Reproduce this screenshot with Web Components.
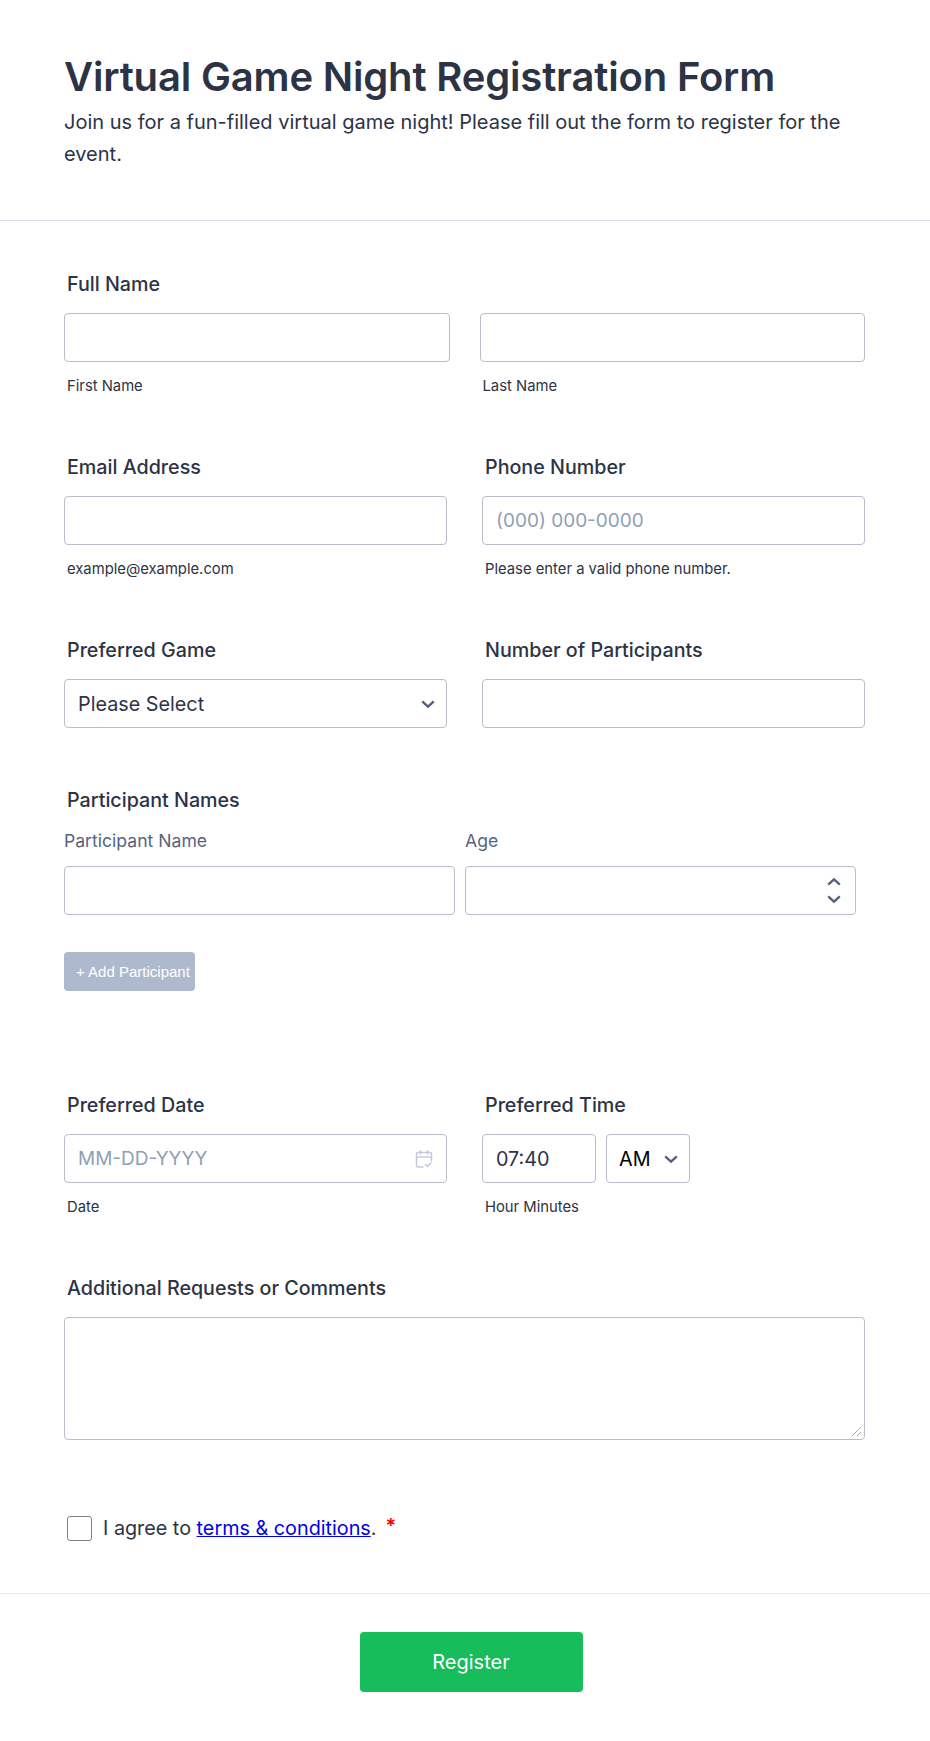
<!DOCTYPE html>
<html lang="en">
<head>
<meta charset="utf-8">
<title>Virtual Game Night Registration Form</title>
<style>
  html, body { margin: 0; background: #fff; }
  body { font-family: Inter, "Liberation Sans", sans-serif; color: #2c3345; }
</style>
</head>
<body>
<form-header title-text="Virtual Game Night Registration Form">Join us for a fun-filled virtual game night! Please fill out the form to register for the event.</form-header>

<form-body>
  <form-line label="Full Name" gap="30" style="margin-bottom:59px">
    <form-field sub="First Name"><text-box></text-box></form-field>
    <form-field sub="Last Name"><text-box></text-box></form-field>
  </form-line>

  <form-row style="margin-bottom:59px">
    <form-line label="Email Address">
      <form-field sub="example@example.com"><text-box></text-box></form-field>
    </form-line>
    <form-line label="Phone Number">
      <form-field sub="Please enter a valid phone number."><text-box muted>(000) 000-0000</text-box></form-field>
    </form-line>
  </form-row>

  <form-row style="margin-bottom:60px">
    <form-line label="Preferred Game">
      <form-field><text-box icon="chevron">Please Select</text-box></form-field>
    </form-line>
    <form-line label="Number of Participants">
      <form-field><text-box></text-box></form-field>
    </form-line>
  </form-row>

  <participant-table></participant-table>

  <form-row style="margin-bottom:59px">
    <form-line label="Preferred Date">
      <form-field sub="Date"><text-box icon="calendar" muted>MM-DD-YYYY</text-box></form-field>
    </form-line>
    <form-line label="Preferred Time">
      <form-field sub="Hour Minutes"><time-box></time-box></form-field>
    </form-line>
  </form-row>

  <form-line label="Additional Requests or Comments" style="margin-bottom:76px">
    <form-field><comment-box></comment-box></form-field>
  </form-line>

  <terms-check></terms-check>
</form-body>

<form-footer>Register</form-footer>

<script>
const baseFont = `font-family: Inter, "Liberation Sans", sans-serif;`;

const chevronDown = `<svg width="14" height="14" viewBox="0 0 14 14" fill="none" stroke="#55607c" stroke-width="2.4" stroke-linejoin="miter"><path d="M1.2 4.4 7 9.6 12.8 4.4"/></svg>`;
const chevronUp = `<svg width="14" height="14" viewBox="0 0 14 14" fill="none" stroke="#55607c" stroke-width="2.4" stroke-linejoin="miter"><path d="M1.2 9.6 7 4.4 12.8 9.6"/></svg>`;
const calendar = `<svg width="18" height="20" viewBox="0 0 18 20" fill="none" stroke="#c3cad8" stroke-width="1.5" stroke-linecap="round" stroke-linejoin="round"><path d="M8 18H3A1.5 1.5 0 0 1 1.5 16.5V5A1.5 1.5 0 0 1 3 3.5H15A1.5 1.5 0 0 1 16.5 5V12"/><path d="M1.5 8H16.5M5.5 1.5V5M12.5 1.5V5"/><path d="M10.5 15.5l2 2 3.5-3.5"/></svg>`;

class FormHeader extends HTMLElement {
  constructor(){
    super();
    this.attachShadow({mode:"open"});
    this.shadowRoot.innerHTML = `
      <style>
        :host { display: block; box-sizing: border-box; height: 221px; padding: 51px 64px 0; border-bottom: 1px solid #d8dae9; ${baseFont} color: #2c3345; }
        h1 { margin: 0 0 3px; font-size: 40px; line-height: 52px; font-weight: 600; letter-spacing: -0.17px; }
        p { margin: 0; font-size: 20px; line-height: 32px; font-weight: 400; }
      </style>
      <h1>${this.getAttribute("title-text")}</h1>
      <p><slot></slot></p>`;
  }
}

class FormBody extends HTMLElement {
  constructor(){
    super();
    this.attachShadow({mode:"open"});
    this.shadowRoot.innerHTML = `
      <style>
        :host { display: block; box-sizing: border-box; height: 1373px; padding: 51px 65px 0 64px; border-bottom: 1px solid #e6e8f2; }
      </style>
      <slot></slot>`;
  }
}

class FormRow extends HTMLElement {
  constructor(){
    super();
    this.attachShadow({mode:"open"});
    this.shadowRoot.innerHTML = `
      <style>
        :host { display: grid; grid-template-columns: 383px 383px; column-gap: 35px; }
      </style>
      <slot></slot>`;
  }
}

class FormLine extends HTMLElement {
  constructor(){
    super();
    this.attachShadow({mode:"open"});
    const gap = this.getAttribute("gap");
    this.shadowRoot.innerHTML = `
      <style>
        :host { display: block; min-width: 0; }
        label { display: block; padding-left: 3px; margin-bottom: 17px; font: 450 19.7px/24px Inter, "Liberation Sans", sans-serif; color: #2c3345; }
        .fields { display: grid; grid-template-columns: ${gap ? `repeat(2, 1fr)` : `1fr`}; column-gap: ${gap || 0}px; }
      </style>
      <label>${this.getAttribute("label")}</label>
      <div class="fields"><slot></slot></div>`;
  }
}

class FormField extends HTMLElement {
  constructor(){
    super();
    this.attachShadow({mode:"open"});
    const sub = this.getAttribute("sub");
    this.shadowRoot.innerHTML = `
      <style>
        :host { display: block; min-width: 0; }
        small { display: block; padding-left: 3px; margin-top: 14px; font: 400 14.8px/20px Inter, "Liberation Sans", sans-serif; color: #2c3345; }
      </style>
      <slot></slot>
      ${sub ? `<small>${sub}</small>` : ""}`;
  }
}

class TextBox extends HTMLElement {
  constructor(){
    super();
    this.attachShadow({mode:"open"});
    const icon = this.getAttribute("icon");
    const glyph = icon === "chevron" ? `<span class="drop">${chevronDown}</span>` : icon === "calendar" ? calendar : icon === "spin" ? `<span class="spin">${chevronUp}${chevronDown}</span>` : "";
    const muted = this.hasAttribute("muted");
    this.shadowRoot.innerHTML = `
      <style>
        :host { display: flex; box-sizing: border-box; height: 49px; align-items: center; justify-content: space-between; padding: 0 13px; background: #fff; border: 1px solid #b8bdc9; border-radius: 4px; font: 400 ${muted ? 19 : 19.8}px/24px Inter, "Liberation Sans", sans-serif; color: ${muted ? "#8fa0b4" : "#2c3345"}; }
        svg { display: block; flex: none; }
        .drop { margin-right: -1.5px; }
        .spin { display: flex; flex-direction: column; gap: 3px; margin-right: 1px; }
      </style>
      <span><slot></slot></span>
      ${glyph}`;
  }
}

class TimeBox extends HTMLElement {
  constructor(){
    super();
    this.attachShadow({mode:"open"});
    this.shadowRoot.innerHTML = `
      <style>
        :host { display: flex; gap: 10px; }
        text-box.hour { width: 114px; }
        text-box.ampm { width: 84px; color: #000; padding-left: 12px; }
      </style>
      <text-box class="hour">07:40</text-box>
      <text-box class="ampm" icon="chevron">AM</text-box>`;
  }
}

class ParticipantTable extends HTMLElement {
  constructor(){
    super();
    this.attachShadow({mode:"open"});
    this.shadowRoot.innerHTML = `
      <style>
        :host { display: block; margin-bottom: 102px; }
        .title { padding-left: 3px; font: 450 19.7px/24px Inter, "Liberation Sans", sans-serif; color: #2c3345; margin-bottom: 17px; }
        .grid { display: grid; grid-template-columns: 391px 391px; column-gap: 10px; width: 792px; }
        .head { font: 400 17.6px/20px Inter, "Liberation Sans", sans-serif; color: #57647e; margin-bottom: 15px; margin-top: 2px; }
        button { display: block; box-sizing: border-box; margin-top: 37px; width: 131px; height: 39px; padding: 0 0 0 12px; text-align: left; background: #aeb9ce; color: #fff; border: 0; border-radius: 4px; font: 400 15px "Liberation Sans", Arial, sans-serif; white-space: nowrap; }
      </style>
      <div class="title">Participant Names</div>
      <div class="grid">
        <div class="head">Participant Name</div>
        <div class="head">Age</div>
        <text-box></text-box>
        <text-box icon="spin"></text-box>
      </div>
      <button type="button">+ Add Participant</button>`;
  }
}

class CommentBox extends HTMLElement {
  constructor(){
    super();
    this.attachShadow({mode:"open"});
    this.shadowRoot.innerHTML = `
      <style>
        :host { display: block; position: relative; box-sizing: border-box; height: 123px; background: #fff; border: 1px solid #b8bdc9; border-radius: 4px; }
        svg { position: absolute; right: 2px; bottom: 2px; }
      </style>
      <svg width="11" height="11" viewBox="0 0 11 11" fill="none" stroke="#a6aab2" stroke-width="1"><path d="M1 10 10 1M6 10l4-4"/></svg>`;
  }
}

class TermsCheck extends HTMLElement {
  constructor(){
    super();
    this.attachShadow({mode:"open"});
    this.shadowRoot.innerHTML = `
      <style>
        :host { display: flex; align-items: center; padding-left: 3px; height: 24px; font: 400 19.8px/24px Inter, "Liberation Sans", sans-serif; color: #2c3345; }
        .box { box-sizing: border-box; width: 25px; height: 25px; border: 1.5px solid #80808a; border-radius: 3px; margin-right: 11px; flex: none; }
        a { color: #0000ee; text-decoration: underline; }
        .req { color: #f00; font-weight: 600; margin-left: 9px; position: relative; top: -2px; }
      </style>
      <span class="box"></span>
      <span>I agree to <a href="#">terms &amp; conditions</a>.</span>
      <span class="req">*</span>`;
  }
}

class FormFooter extends HTMLElement {
  constructor(){
    super();
    this.attachShadow({mode:"open"});
    this.shadowRoot.innerHTML = `
      <style>
        :host { display: flex; justify-content: center; box-sizing: border-box; height: 147px; padding: 38px 0 0 12px; }
        button { width: 223px; height: 60px; background: #18bd5b; color: #fff; border: 0; border-radius: 4px; font: 400 20px/24px Inter, "Liberation Sans", sans-serif; }
      </style>
      <button type="button"><slot></slot></button>`;
  }
}

customElements.define("form-header", FormHeader);
customElements.define("form-body", FormBody);
customElements.define("form-row", FormRow);
customElements.define("form-line", FormLine);
customElements.define("form-field", FormField);
customElements.define("text-box", TextBox);
customElements.define("time-box", TimeBox);
customElements.define("participant-table", ParticipantTable);
customElements.define("comment-box", CommentBox);
customElements.define("terms-check", TermsCheck);
customElements.define("form-footer", FormFooter);
</script>
</body>
</html>
